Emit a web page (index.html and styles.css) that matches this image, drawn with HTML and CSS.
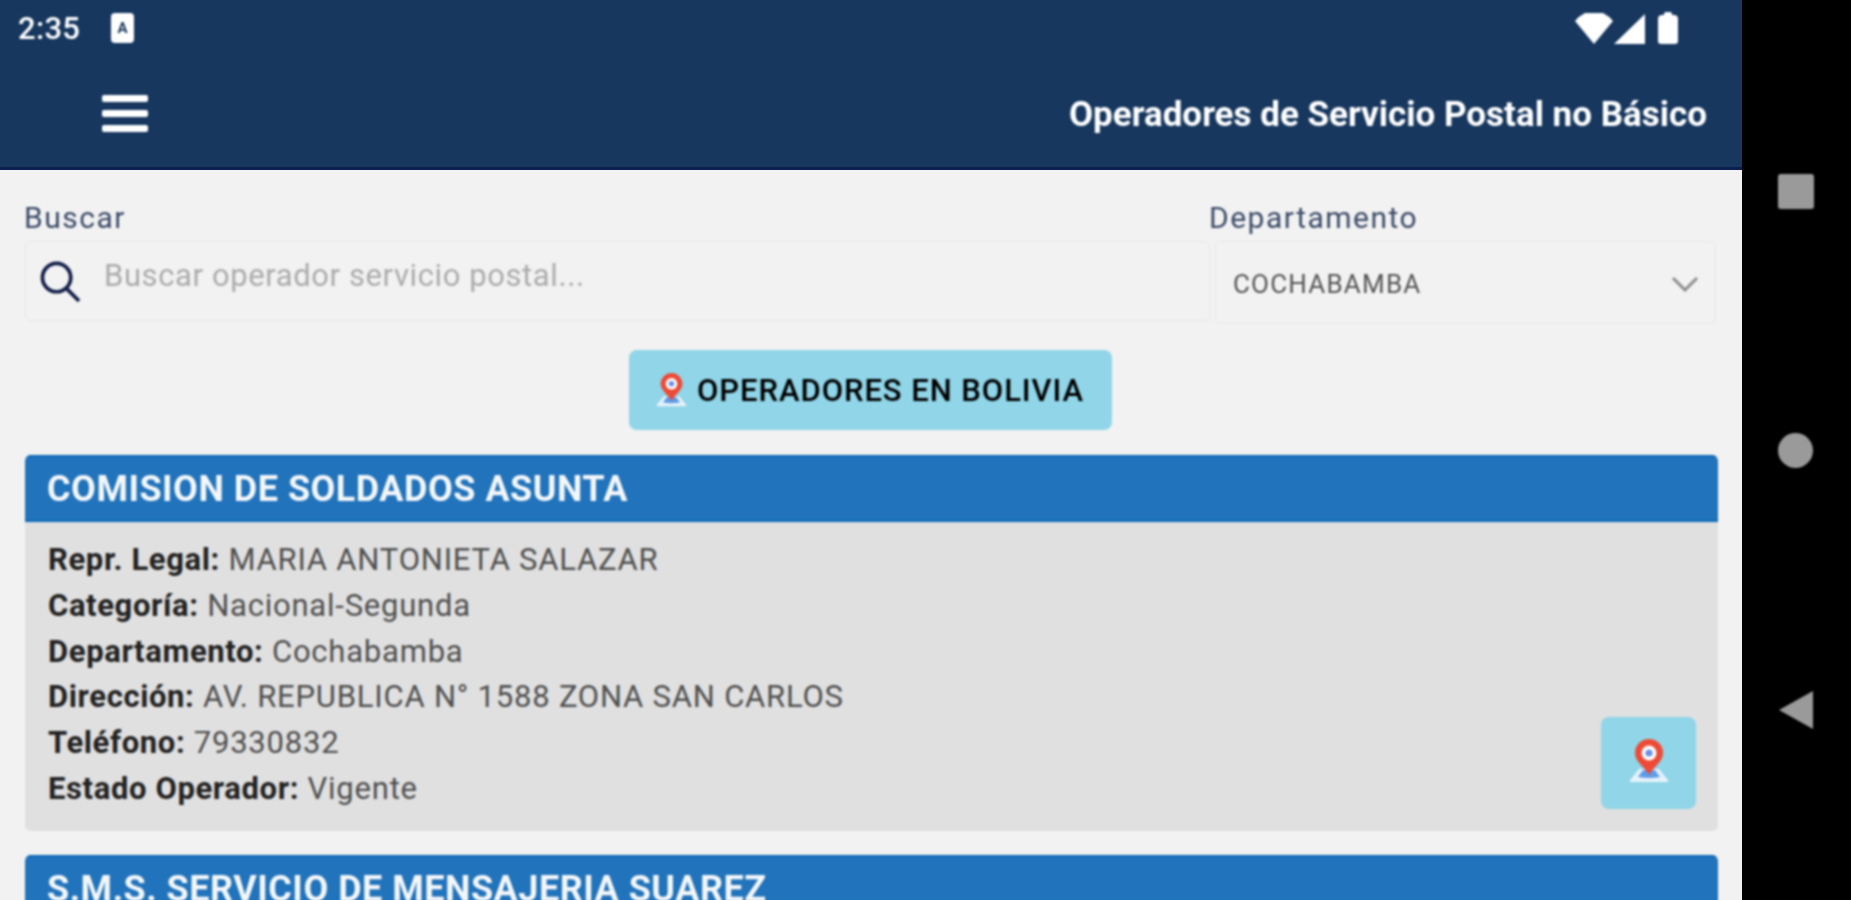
FILE: index.html
```html
<!DOCTYPE html>
<html lang="es">
<head>
<meta charset="utf-8">
<title>Operadores de Servicio Postal no Básico</title>
<link rel="stylesheet" href="styles.css">
</head>
<body>
<div class="device">
  <main class="app">
    <header class="appbar">
      <div class="status">
        <span class="clock">2:35</span>
        <span class="notif"><span class="notif-a">A</span></span>
        <span class="status-icons">
          <svg class="wifi" viewBox="0 0 38 32"><path d="M0 9 Q4 4 10 1 H28 Q34 4 38 9 L19 32 Z"/></svg>
          <svg class="signal" viewBox="0 0 31 30"><path d="M31 0 V30 H0 Z"/></svg>
          <svg class="battery" viewBox="0 0 20 32"><path d="M6 2 Q6 0 8 0 H12 Q14 0 14 2 V3 H16 Q20 3 20 7 V29 Q20 32 17 32 H3 Q0 32 0 29 V7 Q0 3 4 3 H6 Z"/></svg>
        </span>
      </div>
      <div class="toolbar">
        <div class="burger"><i></i><i></i><i></i></div>
        <h1 class="title">Operadores de Servicio Postal no Básico</h1>
      </div>
    </header>
    <section class="content">
      <div class="filters">
        <div class="field">
          <label class="label">Buscar</label>
          <div class="search">
            <svg class="search-icon" viewBox="0 0 42 44"><circle cx="17" cy="18" r="14.5"/><path d="M27 29 L40 42"/></svg>
            <span class="placeholder">Buscar operador servicio postal...</span>
          </div>
        </div>
        <div class="field">
          <label class="label">Departamento</label>
          <div class="select">
            <span>COCHABAMBA</span>
            <svg class="chev" viewBox="0 0 28 16"><path d="M2 2 L14 14 L26 2"/></svg>
          </div>
        </div>
      </div>
      <div class="center">
        <button class="btn-bolivia">
          <svg class="pin pin-sm" viewBox="0 0 40 44"><use href="#pin"/></svg>
          OPERADORES EN BOLIVIA
        </button>
      </div>
      <article class="card">
        <h2 class="card-head">COMISION DE SOLDADOS ASUNTA</h2>
        <div class="card-body">
          <p><b>Repr. Legal:</b> MARIA ANTONIETA SALAZAR</p>
          <p><b>Categoría:</b> Nacional-Segunda</p>
          <p><b>Departamento:</b> Cochabamba</p>
          <p><b>Dirección:</b> AV. REPUBLICA N° 1588 ZONA SAN CARLOS</p>
          <p><b>Teléfono:</b> 79330832</p>
          <p><b>Estado Operador:</b> Vigente</p>
          <button class="btn-map" aria-label="Ver mapa">
            <svg class="pin pin-lg" viewBox="0 0 40 44"><use href="#pin"/></svg>
          </button>
        </div>
      </article>
      <article class="card">
        <h2 class="card-head">S.M.S. SERVICIO DE MENSAJERIA SUAREZ</h2>
      </article>
    </section>
  </main>
  <nav class="navbar">
    <span class="nav-square"></span>
    <span class="nav-circle"></span>
    <svg class="nav-back" viewBox="0 0 34 38"><path d="M0 19 L34 0 V38 Z"/></svg>
  </nav>
</div>
<svg class="defs" width="0" height="0">
  <defs>
    <g id="pin">
      <path d="M1 43 Q0 42 2 40 L10 30 H30 L38 40 Q40 42 39 43 Z" fill="#e6f3fb"/>
      <path d="M9 38 L14 31 H26 L31 38 Q20 40 9 38 Z" fill="#5f9ce8"/>
      <path d="M20 36 C15 27 6 23 6 14 A14 14 0 0 1 34 14 C34 23 25 27 20 36 Z" fill="#ee4a35"/>
      <circle cx="20" cy="14" r="7.5" fill="#fff"/>
      <circle cx="20" cy="14" r="3.6" fill="#6a8fe8"/>
    </g>
  </defs>
</svg>
</body>
</html>
```
FILE: styles.css
```css
* { box-sizing: border-box; }
html, body { margin: 0; height: 100%; overflow: hidden; background: #000; }
body { font-family: Roboto, "Liberation Sans", sans-serif; }
.defs { position: absolute; }

.device { display: flex; width: 1851px; height: 900px; overflow: hidden; }
.app { width: 1742px; height: 900px; flex: none; background: #f2f2f2; overflow: hidden; }
.status, .toolbar, .content, .navbar > * { filter: blur(0.8px); }

.appbar { height: 170px; background: #17375e; border-bottom: 3px solid #0a2050; color: #fff; }
.status { height: 56px; display: flex; align-items: center; padding: 0 0 0 18px; }
.clock { font-size: 31px; font-weight: 500; letter-spacing: 0.3px; width: 93px; }
.notif { width: 23px; height: 30px; background: #fff; border-radius: 4px; display: flex; align-items: center; justify-content: center; }
.notif-a { color: #17375e; font-size: 15px; font-weight: 700; }
.status-icons { margin-left: auto; margin-right: 64px; display: flex; align-items: center; gap: 1px; }
.status-icons svg { fill: #fff; display: block; }
.wifi { width: 38px; height: 32px; }
.signal { width: 31px; height: 30px; margin-top: 2px; }
.battery { width: 20px; height: 32px; margin-left: 12px; }

.toolbar { height: 111px; display: flex; align-items: center; justify-content: space-between; padding: 0 35px 0 102px; }
.burger { width: 46px; height: 37px; display: flex; flex-direction: column; justify-content: space-between; margin-top: 4px; }
.burger i { height: 7px; background: #fff; border-radius: 2px; display: block; }
.title { margin: 5px 0 0; font-size: 35px; font-weight: 700; white-space: nowrap; }

.content { padding: 30px 24px 0 25px; }
.filters { display: grid; grid-template-columns: 1185px 506px; }
.label { display: block; font-size: 30px; letter-spacing: 1.5px; line-height: 36px; color: #3b4a68; margin: 0 0 5px -1px; }
.search { height: 80px; border: 1px solid #e8e8e8; border-radius: 5px; display: flex; align-items: flex-start; padding: 14px 0 0 14px; }
.search-icon { width: 41px; height: 43px; fill: none; stroke: #141f4a; stroke-width: 3.8; margin-top: 4px; }
.placeholder { margin-left: 23px; font-size: 31px; letter-spacing: 0.6px; line-height: 40px; color: #ababab; }
.select { height: 83px; margin-left: 5px; border: 1px solid #e8e8e8; border-radius: 5px; display: flex; align-items: center; justify-content: space-between; padding: 2px 16px 0 17px; font-size: 26px; letter-spacing: 1.2px; color: #555; }
.chev { width: 28px; height: 16px; fill: none; stroke: #8d8d8d; stroke-width: 3; }

.center { display: flex; justify-content: center; margin-top: 26px; padding-right: 3px; }
.btn-bolivia { width: 483px; height: 80px; background: #90d5e8; border: 0; border-radius: 8px; display: flex; align-items: center; justify-content: center; gap: 10px; font-family: inherit; font-size: 31px; font-weight: 500; letter-spacing: 0.95px; color: #000; padding: 0; }
.pin { display: block; flex: none; }
.pin-sm { width: 31px; height: 36px; }
.pin-lg { width: 40px; height: 44px; }

.card { margin-top: 25px; width: 1693px; border-radius: 6px; overflow: hidden; }
.card + .card { margin-top: 24px; }
.card-head { margin: 0; height: 67px; background: #2173bb; border-top: 2px solid #0b69b7; border-bottom: 2px solid #0b69b7; color: #f4f7fa; font-size: 36px; letter-spacing: 0.5px; font-weight: 700; line-height: 64px; padding-left: 22px; white-space: nowrap; }
.card-body { position: relative; height: 309px; background: #e0e0e0; padding: 15px 23px 0; }
.card-body p { margin: 0; font-size: 31px; letter-spacing: 0.78px; line-height: 45.8px; color: #505050; white-space: nowrap; }
.card-body b { font-weight: 700; color: #222; letter-spacing: 0.62px; }
.btn-map { position: absolute; right: 22px; bottom: 22px; width: 95px; height: 92px; background: #90d5e8; border: 0; border-radius: 8px; display: flex; align-items: center; justify-content: center; padding: 0 0 4px; }

.navbar { flex: 1; background: #000; display: flex; flex-direction: column; align-items: center; padding: 174px 2px 0 0; }
.nav-square { width: 36px; height: 35px; background: #9a9a9a; border-radius: 3px; }
.nav-circle { width: 35px; height: 35px; background: #9a9a9a; border-radius: 50%; margin-top: 224px; }
.nav-back { width: 34px; height: 38px; fill: #9a9a9a; margin-top: 223px; }
```
